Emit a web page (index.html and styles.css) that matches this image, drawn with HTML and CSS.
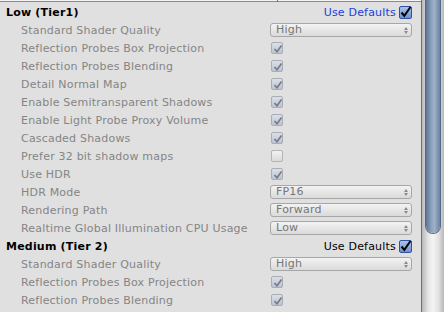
FILE: index.html
```html
<!DOCTYPE html>
<html>
<head>
<meta charset="utf-8">
<link rel="stylesheet" href="styles.css">
</head>
<body>
<div class="panel">
  <div class="content">
    <div class="topstrip"><span class="tick"></span></div>
    <div class="rows">
      <div class="row header">
        <span class="title">Low (Tier1)</span>
        <span class="defaults blue">Use Defaults<span class="ucheck"><svg viewBox="0 0 13 13" width="13" height="13"><path d="M2.5 6.5 L5.3 9.8 L11.5 1" fill="none" stroke="#000" stroke-width="2"/></svg></span></span>
      </div>
      <div class="row"><span class="label">Standard Shader Quality</span><span class="popup">High<i class="arr"></i></span></div>
      <div class="row"><span class="label">Reflection Probes Box Projection</span><span class="cb on"></span></div>
      <div class="row"><span class="label">Reflection Probes Blending</span><span class="cb on"></span></div>
      <div class="row"><span class="label">Detail Normal Map</span><span class="cb on"></span></div>
      <div class="row"><span class="label">Enable Semitransparent Shadows</span><span class="cb on"></span></div>
      <div class="row"><span class="label">Enable Light Probe Proxy Volume</span><span class="cb on"></span></div>
      <div class="row"><span class="label">Cascaded Shadows</span><span class="cb on"></span></div>
      <div class="row"><span class="label">Prefer 32 bit shadow maps</span><span class="cb"></span></div>
      <div class="row"><span class="label">Use HDR</span><span class="cb on"></span></div>
      <div class="row"><span class="label">HDR Mode</span><span class="popup">FP16<i class="arr"></i></span></div>
      <div class="row"><span class="label">Rendering Path</span><span class="popup">Forward<i class="arr"></i></span></div>
      <div class="row"><span class="label">Realtime Global Illumination CPU Usage</span><span class="popup">Low<i class="arr"></i></span></div>
      <div class="row header">
        <span class="title">Medium (Tier 2)</span>
        <span class="defaults">Use Defaults<span class="ucheck"><svg viewBox="0 0 13 13" width="13" height="13"><path d="M2.5 6.5 L5.3 9.8 L11.5 1" fill="none" stroke="#000" stroke-width="2"/></svg></span></span>
      </div>
      <div class="row"><span class="label">Standard Shader Quality</span><span class="popup">High<i class="arr"></i></span></div>
      <div class="row"><span class="label">Reflection Probes Box Projection</span><span class="cb on"></span></div>
      <div class="row"><span class="label">Reflection Probes Blending</span><span class="cb on"></span></div>
    </div>
  </div>
  <div class="scroll"><div class="thumb"></div></div>
</div>
</body>
</html>
```
FILE: styles.css
```css
html, body { margin: 0; padding: 0; }
body {
  width: 444px;
  height: 312px;
  overflow: hidden;
  background: #e0e0e0;
  font-family: "DejaVu Sans", Verdana, sans-serif;
  font-size: 11px;
  letter-spacing: 0.2px;
}
.panel { display: flex; height: 312px; }
.content {
  width: 421px;
  border-right: 1px solid #6f6f6f;
  overflow: hidden;
}
.topstrip {
  height: 1px;
  background: #f4f4f4;
  border-bottom: 1px solid #8a8a8a;
  position: relative;
}
.tick {
  position: absolute;
  left: 277px;
  top: 0;
  width: 1px;
  height: 2px;
  background: #707070;
}
.rows { padding-top: 1px; }
.row {
  display: flex;
  align-items: center;
  height: 18px;
}
.label {
  flex: none;
  width: 270px;
  padding-left: 21px;
  box-sizing: border-box;
  color: #858585;
  white-space: nowrap;
  overflow: hidden;
}
.header {
  justify-content: space-between;
  padding-left: 6px;
  padding-right: 9px;
}
.title { font-weight: bold; color: #000; }
.defaults { display: flex; align-items: center; color: #000; }
.defaults.blue { color: #1c3fd8; }
.ucheck {
  width: 11px;
  height: 11px;
  margin-left: 3px;
  border: 1px solid #3050a0;
  border-radius: 2px;
  background: linear-gradient(#a9c2ea, #6e92d0);
  position: relative;
}
.ucheck svg { position: absolute; left: -1px; top: -1px; }
.popup {
  flex: none;
  width: 142px;
  height: 14px;
  box-sizing: border-box;
  border: 1px solid #a7a7a7;
  border-radius: 3px;
  background: linear-gradient(#f3f3f3, #dadada);
  color: #767676;
  padding-left: 5px;
  line-height: 12px;
  position: relative;
}
.arr {
  position: absolute;
  right: 5px;
  top: 3px;
  width: 0;
  height: 0;
}
.arr::before, .arr::after {
  content: "";
  position: absolute;
  left: -2px;
  border-left: 2px solid transparent;
  border-right: 2px solid transparent;
}
.arr::before { top: 0; border-bottom: 3px solid #8a8a8a; }
.arr::after { top: 4px; border-top: 3px solid #8a8a8a; }
.cb {
  flex: none;
  width: 12px;
  height: 12px;
  box-sizing: border-box;
  margin-left: 1px;
  border: 1px solid #b4b4b4;
  border-radius: 2px;
  background: linear-gradient(#f2f2f2, #dadada);
}
.cb.on {
  border-color: #a9adb6;
  background-color: #c8cfdb;
  background-image: url("data:image/svg+xml;utf8,<svg xmlns='http://www.w3.org/2000/svg' width='12' height='12'><path d='M2.5 6 L5 8.8 L9.5 2.5' fill='none' stroke='%23767b84' stroke-width='1.6'/></svg>"), linear-gradient(#dbe0e8, #bcc4d2);
}
.scroll {
  width: 22px;
  background: linear-gradient(90deg, #b8b8b8, #e8e8e8 30%, #f4f4f4 50%, #e2e2e2 75%, #b8b8b8);
  position: relative;
}
.thumb {
  position: absolute;
  left: 4px;
  top: 0;
  width: 14px;
  height: 233px;
  border-radius: 0 0 7px 7px;
  background: linear-gradient(90deg, #5f7595, #8ea3c0 40%, #9fb1c9 60%, #6c82a1);
  box-shadow: 0 0 0 1px #56698a;
}
```
